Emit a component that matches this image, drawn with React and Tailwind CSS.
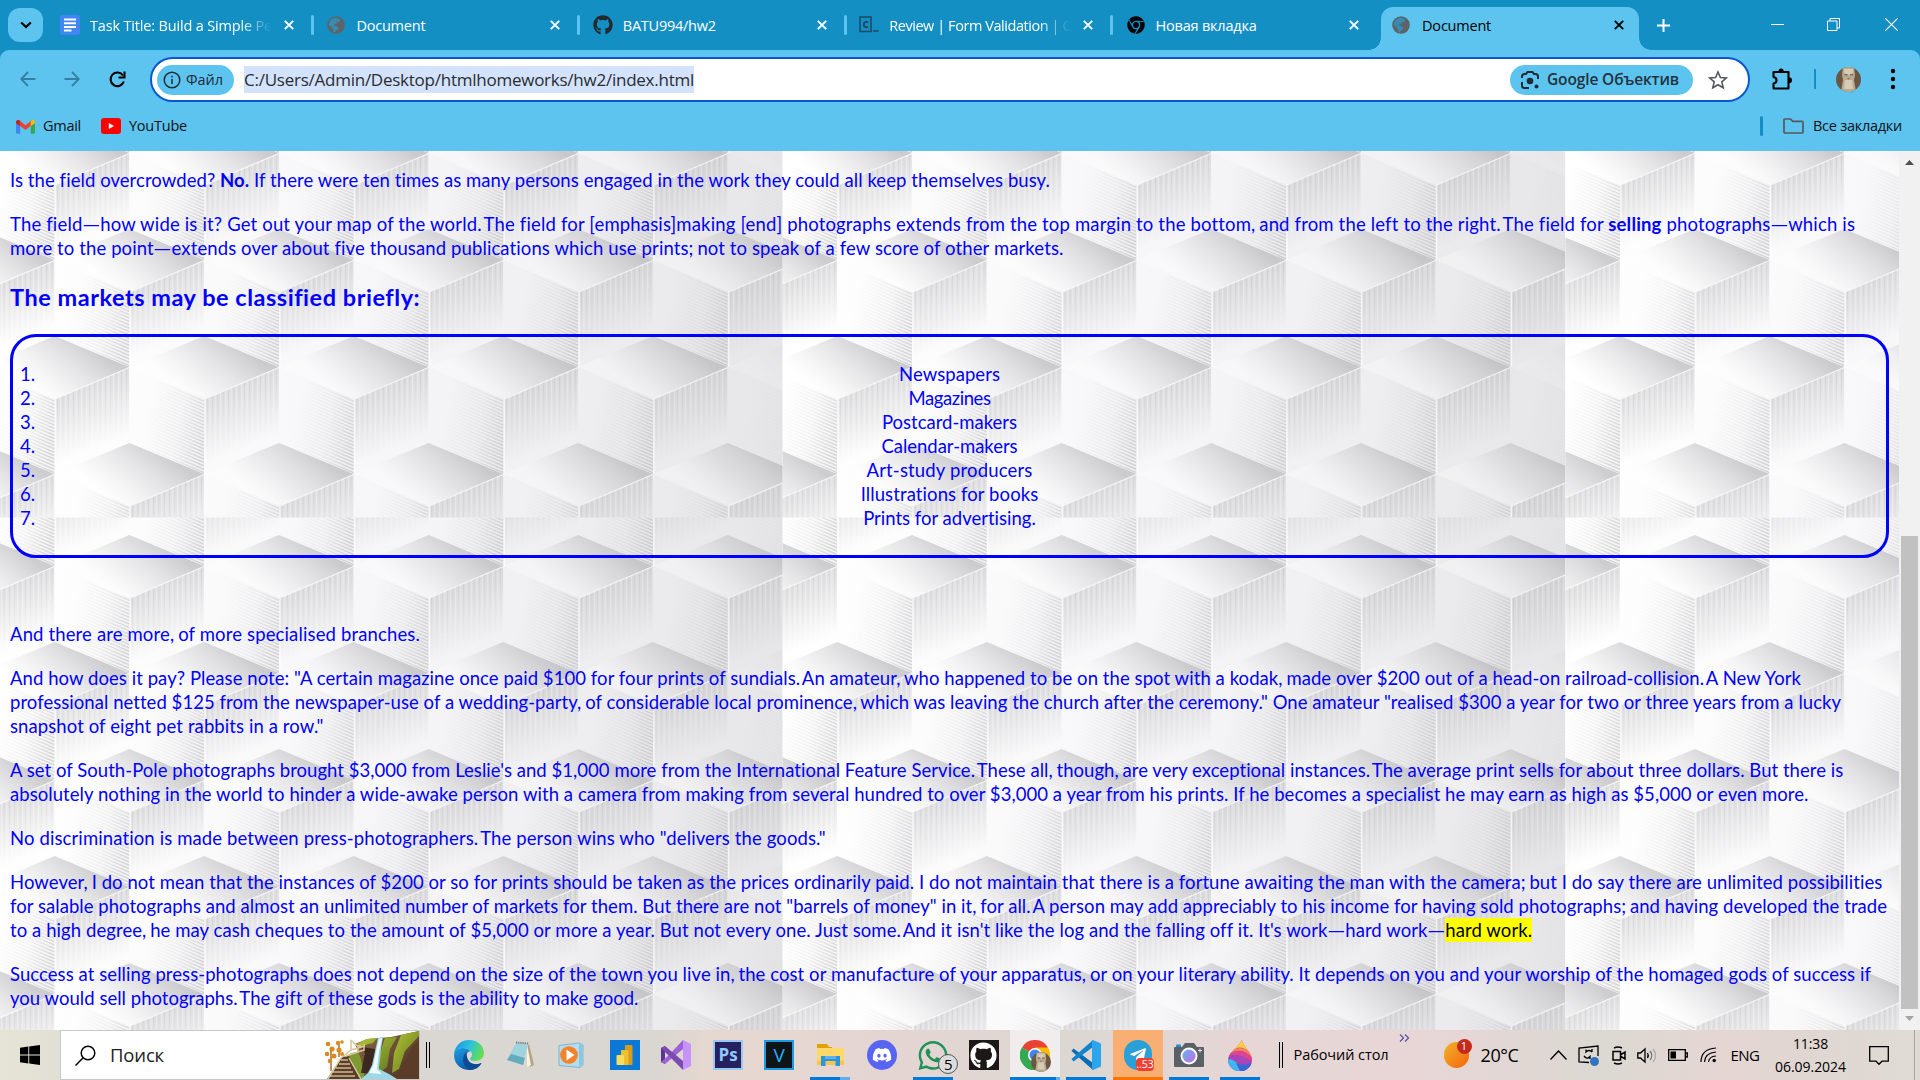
import React, { useLayoutEffect, useRef, useState } from "react";
import { FaGithub, FaDiscord, FaWhatsapp, FaTelegramPlane, FaChrome } from "react-icons/fa";

/* Text set to an exact width by spreading the difference over its letters. */
function Fit({ w, className = "", children }) {
  const ref = useRef(null);
  const [gap, setGap] = useState(null);
  useLayoutEffect(() => {
    const el = ref.current;
    setGap((w - el.getBoundingClientRect().width) / Math.max(1, el.textContent.length));
  }, [w]);
  return (
    <span ref={ref} className={"inline-block shrink-0 whitespace-pre " + className} style={gap === null ? undefined : { letterSpacing: gap + "px" }}>
      {children}
    </span>
  );
}

/* ---------- Browser chrome ---------- */

const Cross = ({ color = "white" }) => (
  <svg className="h-[10px] w-[10px] shrink-0" viewBox="0 0 10 10" stroke={color} strokeWidth="1.9">
    <path d="M.8.8l8.4 8.4M9.2.8L.8 9.2" />
  </svg>
);

const Globe = () => (
  <svg className="h-[18px] w-[18px] shrink-0" viewBox="0 0 18 18">
    <circle cx="9" cy="9" r="8.8" fill="#5f6368" />
    <path fill="#2f93bd" d="M6.500 2.200c3-.9 4.800 0 6.800 2.100l-1 1.600-2.200.4-.8 1.700-2.300.6.200 1.400 2.800.2 1.700 1.700-1 2.100-1.900.6-.6 1.700-2-.3.300-2.300-1.800-1.500v-1.500L1.800 9.300C1.800 6 4 3 6.500 2.200z" opacity=".85" />
  </svg>
);

const DocIcon = () => (
  <svg className="h-5 w-5" viewBox="0 0 20 20">
    <rect width="20" height="20" rx="2" fill="#4285f4" />
    <path stroke="white" strokeWidth="2" d="M4 4.500h12M4 8.300h12M4 12h12M4 15.500h7.500" />
  </svg>
);

const CodeIcon = () => (
  <svg className="h-5 w-5" viewBox="0 0 20 20" fill="none" stroke="#1f4a63">
    <path strokeWidth="1.600" d="M1 2h11v14.500H1zM14 16h5.500" />
    <path strokeWidth="2" d="M9 7.600c-1.800-1.500-4.200-.6-4.200 1.900s2.400 3.400 4.200 1.900" />
  </svg>
);

function Tab({ icon, label, w, fade }) {
  return (
    <div className="flex h-full w-[266.4px] shrink-0 items-center">
      <div className="flex w-5 justify-center">{icon}</div>
      <div className={"ml-[10px] w-[184px] overflow-hidden pt-[2px] text-white " + (fade ? "[mask-image:linear-gradient(90deg,black_150px,transparent_181px)]" : "")}>
        <Fit w={w}>{label}</Fit>
      </div>
      <div className="ml-[10px] flex w-[10px] justify-center"><Cross /></div>
      <div className="ml-[17px] h-5 w-[3px] rounded bg-[#5dc4f0]" />
    </div>
  );
}

function TabStrip() {
  return (
    <div className="flex h-[50px] bg-[#148fc4] text-[14.500px]">
      <div className="ml-2 mt-2 flex h-[34px] w-[35px] items-center justify-center rounded-[12px] bg-[#5dc4f0]">
        <svg className="h-[8px] w-[12px]" viewBox="0 0 12 8" fill="none" stroke="black" strokeWidth="2.200"><path d="M1.200 1.500L6 6l4.800-4.500" /></svg>
      </div>
      <div className="ml-[17px] flex">
        <Tab icon={<DocIcon />} label="Task Title: Build a Simple Pe" w={182} fade />
        <Tab icon={<Globe />} label="Document" w={69} />
        <Tab icon={<FaGithub className="h-5 w-5 text-[#24292f]" />} label="BATU994/hw2" w={93} />
        <Tab icon={<CodeIcon />} label="Review | Form Validation | C" w={182} fade />
        <div className="-mr-[10.5px] flex h-full">
          <div className="flex w-[266px] items-center">
            <div className="flex w-5 justify-center"><FaChrome className="h-[18px] w-[18px] text-black" /></div>
            <Fit w={101} className="ml-[10px] pt-[2px] text-white">Новая вкладка</Fit>
            <div className="ml-[92px]"><Cross /></div>
          </div>
        </div>
      </div>
      <div className="relative mt-[7px] flex h-[43px] w-[258px] items-center rounded-t-[12px] bg-[#5dc4f0] pb-[7px] pl-[11px]">
        <div className="absolute -left-[12px] bottom-0 h-3 w-3 bg-[radial-gradient(circle_at_0_0,transparent_11.5px,#5dc4f0_12px)]" />
        <div className="absolute -right-[12px] bottom-0 h-3 w-3 bg-[radial-gradient(circle_at_100%_0,transparent_11.5px,#5dc4f0_12px)]" />
        <Globe />
        <Fit w={69} className="ml-3 pt-[2px] text-black">Document</Fit>
        <div className="ml-[123px]"><Cross color="black" /></div>
      </div>
      <svg className="ml-[18px] mt-[19px] h-[13px] w-[13px]" viewBox="0 0 13 13" stroke="white" strokeWidth="2"><path d="M6.500 0v13M0 6.500h13" /></svg>
      <svg className="ml-[101px] mt-[18px] h-[13px] w-[13px]" viewBox="0 0 13 13" stroke="white"><path d="M0 6.500h13" /></svg>
      <svg className="ml-[43px] mt-[18px] h-[13px] w-[13px]" viewBox="0 0 13 13" fill="none" stroke="white"><path d="M.5 3h9.500v9.500H.5zM3 3V.5h9.500V10H10" /></svg>
      <svg className="ml-[45px] mt-[18px] h-[13px] w-[13px]" viewBox="0 0 13 13" stroke="white" strokeWidth="1.100"><path d="M0 0l13 13M13 0L0 13" /></svg>
    </div>
  );
}

const Portrait = ({ className }) => (
  <svg className={className} viewBox="0 0 25 25">
    <defs><clipPath id="portrait"><circle cx="12.5" cy="12.5" r="12.5" /></clipPath></defs>
    <g clipPath="url(#portrait)">
      <rect width="25" height="25" fill="#6a5643" />
      <path fill="#b8ab92" d="M7 0h11l1 8-1 5 2 12H5l2-12-1-5z" />
      <path fill="#d6cbb5" d="M8 2h9v4l-4 2-5-2zM9 13h7l1 9H8z" />
      <path fill="#7c6c56" d="M8.500 7h3v1.500h-3zM14 7h3v1.500h-3zM11 11h3l-1.500 1.500z" />
    </g>
  </svg>
);

function Toolbar() {
  return (
    <div className="bg-[#148fc4]">
      <div className="h-[101px] rounded-t-[9px] bg-[#5dc4f0]">
        <div className="flex h-[58px] items-center">
          <svg className="ml-5 h-4 w-4" viewBox="0 0 16 16" fill="none" stroke="#377f9f" strokeWidth="1.800"><path d="M15.500 8H1.500M8 1L1.200 8 8 15" /></svg>
          <svg className="ml-[28px] h-4 w-4" viewBox="0 0 16 16" fill="none" stroke="#377f9f" strokeWidth="1.800"><path d="M.5 8h14M8 1l6.800 7L8 15" /></svg>
          <svg className="ml-[29px] h-[17px] w-[17px]" viewBox="0 0 17 17" fill="none" stroke="black" strokeWidth="2.100"><path d="M14.800 10.500A6.800 6.800 0 1 1 14 4.500" /><path d="M15.500.5v6h-6" /></svg>
          <div className="ml-[24px] mt-[1px] flex h-[45px] w-[1600px] items-center rounded-full border-[2.5px] border-[#0b57d0] bg-white">
            <div className="ml-[5px] flex h-[30px] w-[77px] items-center rounded-full bg-[#5dc4f0] pl-[6px]">
              <svg className="h-[18px] w-[18px]" viewBox="0 0 18 18" fill="none" stroke="#1f2b33" strokeWidth="1.500"><circle cx="9" cy="9" r="7.800" /><path d="M9 8v5M9 4.800v1.800" /></svg>
              <Fit w={37} className="ml-[5px] text-[14.500px] font-medium text-[#1f2937]">Файл</Fit>
            </div>
            <div className="ml-[10px] flex h-[27px] items-center bg-[#d3e3fd]">
              <Fit w={450} className="text-[17px] text-[#2a2d32]">C:/Users/Admin/Desktop/htmlhomeworks/hw2/index.html</Fit>
            </div>
            <div className="ml-auto flex h-[30px] w-[183px] items-center rounded-full bg-[#5dc4f0] pl-[10px]">
              <svg className="h-5 w-5" viewBox="0 0 20 20" fill="none" stroke="#1f2b33" strokeWidth="2"><path d="M2 8V6.500Q2 4 4.500 4H6l1.500-2h5L14 4h1.500Q18 4 18 6.500V9M2 12v3.500Q2 18 4.500 18H9" /><circle cx="10" cy="11" r="3.300" fill="#1f2b33" stroke="none" /><circle cx="16.500" cy="16.500" r="2" fill="#1f2b33" stroke="none" /></svg>
              <Fit w={132} className="ml-[7px] pt-[1px] text-[15.500px] font-semibold text-[#22333d]">Google Объектив</Fit>
            </div>
            <svg className="ml-[15px] mr-[20px] h-[20px] w-[20px]" viewBox="0 0 20 20" fill="none" stroke="#55595e" strokeWidth="1.600"><path d="M10 2l2.400 5.500 5.900.5-4.500 3.900 1.400 5.900L10 14.700l-5.200 3.100 1.400-5.900L1.700 8l5.900-.5z" /></svg>
          </div>
          <svg className="ml-[21px] h-[25px] w-[23px]" viewBox="0 0 23 25" fill="none" stroke="black" strokeWidth="2.100"><path strokeLinejoin="round" d="M2.500 5H17.500V21.500H2.500V16.500Q5.500 16 5.500 13.200T2.500 10z" /><path fill="black" stroke="none" d="M7.500 4.500a2.600 3 0 0 1 5.200 0zM18 10.300a3 3 0 0 1 0 6z" /></svg>
          <div className="ml-[20px] h-5 w-[2px] bg-[#148fc4]" />
          <Portrait className="ml-[20px] h-[25px] w-[25px]" />
          <svg className="ml-[29px] h-[22px] w-[6px]" viewBox="0 0 6 22"><circle cx="3" cy="3" r="2.200" /><circle cx="3" cy="11" r="2.200" /><circle cx="3" cy="19" r="2.200" /></svg>
        </div>
        <div className="flex h-[36px] items-center text-[14.500px] text-[#111]">
          <svg className="ml-[16px] h-[15px] w-[19px]" viewBox="0 0 20 15"><path fill="#4285f4" d="M0 3h4.500v12H1.500Q0 15 0 13.500z" /><path fill="#34a853" d="M15.500 3H20v10.500q0 1.500-1.500 1.500h-3z" /><path fill="#ea4335" d="M0 2.500Q1 0 3.500 1L10 6.300 16.500 1v5L10 11.300 3 6z" /><path fill="#fbbc04" d="M15.500 2Q19 -1 20 2.500V4l-4.500 3z" /><path fill="#c5221f" d="M0 2.500Q1-.5 4 1.200V7L0 4z" /></svg>
          <Fit w={38} className="ml-[8px]">Gmail</Fit>
          <svg className="ml-[20px] h-[16px] w-[20px]" viewBox="0 0 20 16"><rect width="20" height="16" rx="3" fill="#f00" /><path fill="white" d="M7.800 5l5.200 3-5.200 3z" /></svg>
          <Fit w={58} className="ml-[8px]">YouTube</Fit>
          <div className="ml-auto h-5 w-[3px] rounded bg-[#148fc4]" />
          <svg className="ml-[20px] h-4 w-[21px]" viewBox="0 0 21 16" fill="none" stroke="#55595e" strokeWidth="1.700"><path strokeLinejoin="round" d="M1 1.500Q1 1 2 1h5.500l2.200 2.300H19Q20 3.300 20 4.300V14q0 1-1 1H2q-1 0-1-1z" /></svg>
          <Fit w={89} className="ml-[9px] mr-[18px]">Все закладки</Fit>
        </div>
      </div>
    </div>
  );
}

/* ---------- Page wallpaper: stacked cubes, one tile is 782.7 wide ---------- */

const TILE = 782.7;

function Cubes({ from, rows, odd }) {
  const out = [];
  for (let r = 0; r < rows; r++) {
    const shift = (r + odd) % 2 ? 129.4 : 54.6;
    for (let c = -1; c < 6; c++) {
      const x = shift + c * 149.6;
      out.push(<use key={r + ":" + c} href="#cube" x={x} y={from + r * 107} opacity={x > 790 ? 0.35 : 1} />);
    }
  }
  return out;
}

function Wallpaper() {
  return (
    <svg className="absolute inset-0 h-[879px] w-[1899px]" viewBox="0 151 1899 879">
      <defs>
        <linearGradient id="tone" x1="0" x2="1"><stop offset="0" stopColor="#fff" /><stop offset=".5" stopColor="#f6f6f8" /><stop offset="1" stopColor="#e6e6e8" /></linearGradient>
        <linearGradient id="top" gradientUnits="userSpaceOnUse" x1="24" y1="0" x2="-20" y2="54"><stop offset="0" stopColor="#b4b4b7" stopOpacity=".66" /><stop offset=".5" stopColor="#cdcdd0" stopOpacity=".4" /><stop offset="1" stopColor="#fff" stopOpacity=".3" /></linearGradient>
        <linearGradient id="fadeL" gradientUnits="userSpaceOnUse" x1="-58" y1="80" x2="2" y2="92"><stop offset="0" stopColor="#fff" stopOpacity="0" /><stop offset=".55" stopColor="#fff" stopOpacity=".3" /><stop offset="1" stopColor="#fff" stopOpacity=".95" /></linearGradient>
        <linearGradient id="fadeR" gradientUnits="userSpaceOnUse" x1="14" y1="48" x2="40" y2="112"><stop offset="0" stopColor="#fff" /><stop offset=".5" stopColor="#fff" stopOpacity=".5" /><stop offset="1" stopColor="#fff" stopOpacity="0" /></linearGradient>
        <pattern id="slant" width="4" height="3.400" patternUnits="userSpaceOnUse" patternTransform="skewY(23)"><rect width="4" height="3.400" fill="#c9c9cc" fillOpacity=".2" /><rect width="4" height="1.400" fill="#a2a2a6" fillOpacity=".46" /></pattern>
        <pattern id="vert" width="5.300" height="8" patternUnits="userSpaceOnUse"><rect width="5.300" height="8" fill="#bebec2" fillOpacity=".54" /><rect width="1" height="8" fill="#fff" fillOpacity=".3" /><rect x="2.600" width="1" height="8" fill="#98989c" fillOpacity=".18" /></pattern>
        <mask id="maskL" maskUnits="userSpaceOnUse" x="-76" y="30" width="80" height="110"><path fill="url(#fadeL)" d="M-74.800 31L0 62.700V138L-74.800 106z" /></mask>
        <mask id="maskR" maskUnits="userSpaceOnUse" x="-1" y="30" width="80" height="110"><path fill="url(#fadeR)" d="M0 62.700L74.800 31V106L0 138z" /></mask>
        <g id="cube">
          <path fill="url(#slant)" mask="url(#maskL)" d="M-74.800 31L0 62.700V138L-74.800 106z" />
          <path fill="url(#vert)" mask="url(#maskR)" d="M0 62.700L74.800 31V106L0 138z" />
          <path fill="url(#top)" d="M0 0L74.800 31 0 62.700-74.800 31z" />
          <path fill="none" stroke="#fff" strokeOpacity=".65" strokeWidth="1.300" d="M1 138V63L74.800 31.500" />
        </g>
        <clipPath id="upper"><rect y="0" width={TILE} height="517.5" /></clipPath>
        <clipPath id="lower"><rect y="517.5" width={TILE} height="520" /></clipPath>
      </defs>
      {[0, 1, 2].map((t) => (
        <g key={t} transform={"translate(" + t * TILE + " 0)"}>
          <rect width={TILE} height="1040" fill="url(#tone)" />
          <g clipPath="url(#upper)"><Cubes from={15} rows={5} odd={1} /></g>
          <g clipPath="url(#lower)"><Cubes from={428} rows={6} odd={0} /></g>
        </g>
      ))}
    </svg>
  );
}

/* ---------- Page ---------- */

/* Kerns the spaces after full stops and commas and widens the long dashes. */
const T = ({ children }) =>
  children.split(/((?<=\.) (?=[ATY])|(?<=[,;]) |—)/).map((part, i, all) => {
    if (part === "—") return <span key={i} className="mx-[1.5px] inline-block scale-x-[1.25]">—</span>;
    if (i % 2) return <span key={i} className={all[i - 1].endsWith(".") ? "-ml-[2.5px]" : "-ml-[1px]"}>{part}</span>;
    return part;
  });

const Para = ({ lines }) => (
  <p className="mb-[20px]">
    {lines.map(([w, text]) => (
      <span key={w} className="flex h-6 items-center"><Fit w={w}>{typeof text === "string" ? <T>{text}</T> : text}</Fit></span>
    ))}
  </p>
);

const markets = [
  ["Newspapers", 101],
  ["Magazines", 82],
  ["Postcard-makers", 135],
  ["Calendar-makers", 136],
  ["Art-study producers", 166],
  ["Illustrations for books", 178],
  ["Prints for advertising.", 173],
];

function Page() {
  return (
    <div className="relative flex h-[879px] overflow-hidden">
      <Wallpaper />
      <main className="relative w-[1899px] pl-[10px] pt-[17px] font-['Gill_Sans_MT','Gill_Sans','Lato',sans-serif] text-[18.500px] leading-6 text-[#0000ff]">
        <Para lines={[[1040, <><T>Is the field overcrowded? </T><b>No.</b><T> If there were ten times as many persons engaged in the work they could all keep themselves busy.</T></>]]} />
        <Para lines={[
          [1843, <><T>The field—how wide is it? Get out your map of the world. The field for [emphasis]making [end] photographs extends from the top margin to the bottom, and from the left to the right. The field for </T><b>selling</b><T> photographs—which is</T></>],
          [1053.500, "more to the point—extends over about five thousand publications which use prints; not to speak of a few score of other markets."],
        ]} />
        <h3 className="mb-[23px] mt-[23px] flex h-7 items-center text-[23.500px] font-bold"><Fit w={410}>The markets may be classified briefly:</Fit></h3>
        <ol className="h-[224px] w-[1879px] rounded-[26px] border-[3px] border-[#0000ff] pt-[25px]">
          {markets.map(([name, w], i) => (
            <li key={name} className="flex h-6 items-center pl-[7px]">
              <Fit w={16} className="w-4">{i + 1 + "."}</Fit>
              <span className="flex grow justify-center pr-[23px]"><Fit w={w}>{name}</Fit></span>
            </li>
          ))}
        </ol>
        <div className="mt-[64px]">
          <Para lines={[[410, "And there are more, of more specialised branches."]]} />
          <Para lines={[
            [1791, 'And how does it pay? Please note: "A certain magazine once paid $100 for four prints of sundials. An amateur, who happened to be on the spot with a kodak, made over $200 out of a head-on railroad-collision. A New York'],
            [1830, 'professional netted $125 from the newspaper-use of a wedding-party, of considerable local prominence, which was leaving the church after the ceremony." One amateur "realised $300 a year for two or three years from a lucky'],
            [313.500, 'snapshot of eight pet rabbits in a row."'],
          ]} />
          <Para lines={[
            [1834, "A set of South-Pole photographs brought $3,000 from Leslie's and $1,000 more from the International Feature Service. These all, though, are very exceptional instances. The average print sells for about three dollars. But there is"],
            [1798.500, "absolutely nothing in the world to hinder a wide-awake person with a camera from making from several hundred to over $3,000 a year from his prints. If he becomes a specialist he may earn as high as $5,000 or even more."],
          ]} />
          <Para lines={[[816, 'No discrimination is made between press-photographers. The person wins who "delivers the goods."']]} />
          <Para lines={[
            [1873, "However, I do not mean that the instances of $200 or so for prints should be taken as the prices ordinarily paid. I do not maintain that there is a fortune awaiting the man with the camera; but I do say there are unlimited possibilities"],
            [1877, 'for salable photographs and almost an unlimited number of markets for them. But there are not "barrels of money" in it, for all. A person may add appreciably to his income for having sold photographs; and having developed the trade'],
            [1521.500, <><T>to a high degree, he may cash cheques to the amount of $5,000 or more a year. But not every one. Just some. And it isn't like the log and the falling off it. It's work—hard work—</T><mark className="inline-block h-6 bg-[#ffff00] text-black">hard work.</mark></>],
          ]} />
          <Para lines={[
            [1861, "Success at selling press-photographs does not depend on the size of the town you live in, the cost or manufacture of your apparatus, or on your literary ability. It depends on you and your worship of the homaged gods of success if"],
            [628, "you would sell photographs. The gift of these gods is the ability to make good."],
          ]} />
        </div>
      </main>
      <div className="relative flex w-[21px] flex-col items-center bg-[#f1f1f1]">
        <svg className="mt-[9px] h-[5px] w-[9px]" viewBox="0 0 9 5"><path fill="#505050" d="M0 5L4.500 0 9 5z" /></svg>
        <div className="mt-[371px] h-[473px] w-[17px] bg-[#c1c1c1]" />
        <svg className="mt-[7px] h-[5px] w-[9px]" viewBox="0 0 9 5"><path fill="#a3a3a3" d="M0 0L4.500 5 9 0z" /></svg>
      </div>
    </div>
  );
}

/* ---------- Taskbar ---------- */

const Waterfall = () => (
  <svg className="h-[48px] w-[94px]" viewBox="0 0 94 48">
    <defs>
      <linearGradient id="cliff" x1="0" x2="1" y2="1"><stop offset="0" stopColor="#8a6a46" /><stop offset="1" stopColor="#4b3022" /></linearGradient>
      <linearGradient id="moss" x1="0" x2="1" y2="1"><stop offset="0" stopColor="#b5c535" /><stop offset="1" stopColor="#5f7622" /></linearGradient>
    </defs>
    <path fill="#7e9a33" d="M8 48L18 28l8-6 14-2 8 10-4 18z" />
    <path fill="url(#cliff)" d="M30 13l12-5 12-1 12-1L94 0v48H40l-4-20z" />
    <path fill="#3b281f" d="M36 16l14 2-1 16-7 8H36l4-20z" />
    <path fill="url(#moss)" d="M32 13l10-5 10-1-4 5-12 3zM60 7l12-1-7 12-3 18-8 6 1-20z" />
    <path fill="url(#moss)" d="M76 4L94 0v5L80 20l-6 18-7 4 2-20z" />
    <path fill="#5a3c28" d="M88 15l6-6v39H70z" />
    <path fill="#9bd8ea" d="M53 7l5-1-2 12-2 20 10 5 8 5H36l7-6 4-8z" />
    <path fill="#eefafd" d="M54 8l3-1-3 14-2 17 5 5-13-1 4-7 3-14z" />
    <path fill="#5b3d2a" d="M17 26l7-1 11 23H2z" />
    <g stroke="#cdb98f" strokeWidth="1.700"><path d="M16 29h7M14 33h11M11 37h15M8 41h20M5 45h25" /></g>
    <path fill="none" stroke="#d9c79b" strokeWidth="1.500" d="M3 48L16 27l10-8 14-4M24 27l12 21M21 25l18-6M26 9l5 5 8 2M26 9v10M33 14v7M39 13v7" />
    <path stroke="#a0632a" strokeWidth="1.400" d="M6 40V16M14 26V12" />
    <g fill="#dd8a1c"><circle cx="3" cy="13" r="2.300" /><circle cx="7" cy="18" r="2.600" /><circle cx="2" cy="23" r="2.300" /><circle cx="9" cy="25" r="2.500" /><circle cx="14" cy="19" r="2.600" /><circle cx="13" cy="12" r="2.200" /><circle cx="17" cy="11" r="1.800" /><circle cx="17" cy="23" r="2" /><circle cx="5" cy="30" r="2.300" /></g>
  </svg>
);

const Edge = () => (
  <svg className="h-[30px] w-[30px]" viewBox="0 0 30 30">
    <defs>
      <linearGradient id="e1" x1="0" x2="1" y2=".3"><stop offset="0" stopColor="#1a8fe0" /><stop offset=".55" stopColor="#2cc0df" /><stop offset="1" stopColor="#62dd55" /></linearGradient>
      <linearGradient id="e2" x1="0" x2=".6" y2="1"><stop offset="0" stopColor="#1b9de2" /><stop offset="1" stopColor="#0d57a8" /></linearGradient>
    </defs>
    <path fill="url(#e2)" d="M0 15C0 10 5 8 9 8c3 0 6 1 7.500 3-3 1-5 3-4 7 1 5 8 8 15 5-3 5-7 7-12 7C7 30 0 24 0 15z" />
    <path fill="#0c4a94" d="M12.500 12c-5 4-5 14 3 18 5 0 10-3 12-7-7 3-15 1-15-11z" />
    <path fill="url(#e1)" d="M0 14.500C.5 6 7 0 15 0c9 0 15 6 15 13 0 5-4 8-9 8-3 0-5-1-5-2s2-2 2-4.500C18 11 14 8 9 8c-4 0-8 2.500-9 6.500z" />
  </svg>
);

const Notepad = () => (
  <svg className="h-[28px] w-[30px]" viewBox="0 0 30 28">
    <path fill="#b6a27e" d="M24 3l5 21-4 2-3-20z" />
    <path fill="#f6f3e6" d="M22 3l4 21-4 2z" />
    <path fill="#9fd4df" d="M11 2l12 1-5 21L2 19z" /><path fill="#4f9fb2" d="M6 13l14 4-2 7L2 19z" opacity=".75" />
    <path stroke="#777" strokeWidth="2" strokeDasharray="1.200 1" d="M11 1.500l12.500 1" />
  </svg>
);

const MediaPlayer = () => (
  <svg className="h-[28px] w-[28px]" viewBox="0 0 28 28">
    <path fill="#b5dcec" stroke="#7db8d2" d="M2 4.500L22 2l4 2v20l-3 2.500-21-2z" />
    <path fill="#8cc7df" d="M22 2.500l3.500 2v19L22 26z" />
    <circle cx="12" cy="14" r="8.800" fill="#f4822a" /><path fill="white" d="M9.500 8.500l8 5.500-8 5.500z" />
  </svg>
);

const PowerBI = () => (
  <svg className="h-[30px] w-[30px]" viewBox="0 0 30 30">
    <rect width="30" height="30" fill="#0a78d7" />
    <rect x="15" y="5" width="7.500" height="20" rx="1" fill="#d99b1c" /><rect x="11" y="10" width="7.500" height="15" rx="1" fill="#efbf2d" /><rect x="6.500" y="15" width="7.500" height="10" rx="1" fill="#fbdc5c" />
  </svg>
);

const VisualStudio = () => (
  <svg className="h-[30px] w-[30px]" viewBox="0 0 30 30">
    <path fill="#5b3590" d="M0 8l4-2v18l-4-2z" />
    <path fill="#9b63d6" d="M4 24L0 22l8-7L22 0v9z" />
    <path fill="#7b4bb0" d="M4 6L0 8l8 8 14 14v-9z" />
    <path fill="#c792fa" d="M22 0l8 4v22l-8 4z" />
  </svg>
);

const Explorer = () => (
  <svg className="h-[28px] w-[28px]" viewBox="0 0 28 28">
    <path fill="#e0a200" d="M1 3h10l2 3h3v6H1z" /><path fill="#ffd968" d="M1 7h27v17H1z" /><path fill="#f7c648" d="M1 20h27v4H1z" />
    <path fill="#2f93dd" d="M5 15h19v10h-4.500v-5h-10v5H5z" /><path fill="#5db2ee" d="M9 15h11v3H9z" />
  </svg>
);

const ChromeLogo = () => (
  <svg className="h-[30px] w-[30px]" viewBox="0 0 30 30">
    <path fill="#ea4335" d="M15 15L2 7.500a15 15 0 0 1 26 0z" />
    <path fill="#fbbc04" d="M15 15L15 7.500h13A15 15 0 0 1 15 30z" />
    <path fill="#34a853" d="M15 15l2.500 15A15 15 0 0 1 2 7.500z" />
    <circle cx="15" cy="15" r="7" fill="white" /><circle cx="15" cy="15" r="5.500" fill="#4285f4" />
  </svg>
);

const VSCode = () => (
  <svg className="h-[30px] w-[30px]" viewBox="0 0 30 30">
    <path fill="#0b6cb5" d="M2.500 8.500L22 23v7L.5 11z" /><path fill="#1284cc" d="M2.500 21.500L22 7V0L.5 19z" />
    <path fill="#2ba5ec" d="M22 0l8 3.500v23L22 30l-1-1V1z" />
  </svg>
);

const Camera = () => (
  <svg className="h-[26px] w-[30px]" viewBox="0 0 30 26">
    <defs><linearGradient id="lens" x1="0" x2="1" y2="1"><stop offset="0" stopColor="#5fb3f4" /><stop offset="1" stopColor="#c76be0" /></linearGradient></defs>
    <rect x="2" y="2.500" width="5" height="4" rx="1" fill="#1a8fdf" />
    <path fill="#596066" d="M0 6Q0 5 1 5h7l3-4h9l3 4h6q1 0 1 1v18q0 1-1 1H1q-1 0-1-1z" />
    <circle cx="15" cy="14" r="8.500" fill="#fff" /><circle cx="15" cy="14" r="6.500" fill="url(#lens)" /><path stroke="#dfe3e6" d="M26 6.500v4M24 8.500h4" />
  </svg>
);

const Drop = () => (
  <svg className="h-[31px] w-[24px]" viewBox="0 0 24 31">
    <defs><clipPath id="drop"><path d="M14 0C14 6 24 12 24 20a11.500 11 0 0 1-24 0C0 12 10 8 14 0z" /></clipPath></defs>
    <g clipPath="url(#drop)">
      <rect width="24" height="31" fill="#a945b4" /><path fill="#ffcf33" d="M0 0h24v14Q12 2 4 12z" /><path fill="#ff7f50" d="M4 11Q12 4 24 13v5Q14 6 2 14z" /><path fill="#e2458f" d="M2 13q10-5 22 4v5Q12 12 0 16z" />
      <path fill="#3fb7f2" d="M0 19q9 0 14 12H0z" /><path fill="#3966d8" d="M8 23q6 3 16 0v8H12z" />
    </g>
  </svg>
);

const Letters = ({ className, children }) => <div className={"flex h-[30px] w-[30px] items-center justify-center " + className}>{children}</div>;

const apps = [
  { icon: <Edge /> },
  { icon: <Notepad /> },
  { icon: <MediaPlayer /> },
  { icon: <PowerBI />, place: "ml-[2px]" },
  { icon: <VisualStudio /> },
  { icon: <Letters className="border-2 border-[#9ac8f5] bg-[#25215e] text-[17px] font-bold text-[#8fc9ff]">Ps</Letters>, place: "ml-[1px]" },
  { icon: <Letters className="border-2 border-[#1a9be6] bg-[#0d1519] text-[19px] text-[#27aef5]">V</Letters> },
  { icon: <Explorer />, bar: "bg-[linear-gradient(90deg,#0078d7_30px,#62aeea_30px)]" },
  { icon: <div className="flex h-[30px] w-[30px] items-center justify-center rounded-full bg-[#5865f2]"><FaDiscord className="h-[20px] w-[20px] text-white" /></div> },
  { icon: <><FaWhatsapp className="h-[33px] w-[32px] text-[#1f9256]" /><div className="absolute left-[31px] top-[24px] flex h-5 w-5 items-center justify-center rounded-full border border-[#555] bg-[#dcdcdc] text-[15px] text-black">5</div></>, bar: "bg-[#0078d7]" },
  { icon: <div className="flex h-[30px] w-[30px] items-center justify-center bg-[#1b1817]"><FaGithub className="h-[27px] w-[27px] text-white" /></div> },
  { icon: <><ChromeLogo /><Portrait className="absolute left-[21px] top-[22px] h-5 w-5" /></>, bg: "bg-[#f1edec]", bar: "bg-[linear-gradient(90deg,#0078d7_46px,#62aeea_46px)]", wide: true },
  { icon: <VSCode />, bar: "bg-[#0078d7]" },
  { icon: <><div className="flex h-[30px] w-[28px] items-center justify-center rounded-full bg-[#2a9fd8]"><FaTelegramPlane className="h-[18px] w-[18px] text-white" /></div><div className="absolute left-[24px] top-[28px] flex h-[13px] w-[18px] items-center justify-center rounded bg-[#f0402f] text-[10.500px] text-white">..53</div></>, bg: "bg-[#f9ae74]", bar: "bg-[#ff7300]", wide: true },
  { icon: <Camera />, bar: "bg-[#0078d7]" },
  { icon: <Drop />, bar: "bg-[#0078d7]" },
];

const Rails = ({ className }) => <div className={"h-[26px] w-[4px] shrink-0 border-x border-black " + className} />;

function Taskbar() {
  return (
    <div className="flex h-[50px] items-center bg-[linear-gradient(90deg,#e5e4d5_0,#e2e0d5_60px,#dad7d2_430px,#dad6d2_660px,#e6d8cf_710px,#e4d5d3_900px,#dcd7d2_1080px,#e6d6d5_1250px,#e8d6d6_1420px,#dbd8d2_1600px,#e5d6d4_1720px,#e0d6d1_1800px,#dfdbd4_1920px)] text-black">
      <svg className="ml-5 h-5 w-5 shrink-0" viewBox="0 0 20 20"><path d="M0 2.800L8.300 1.600v7.900H0zM9.200 1.500L20 0v9.500H9.200zM0 10.400h8.300v8L0 17.200zM9.200 10.400H20V20L9.200 18.500z" /></svg>
      <div className="ml-5 flex h-[50px] w-[360px] shrink-0 items-center border border-[#c8c8c8] bg-white">
        <svg className="ml-[14px] h-[21px] w-[21px]" viewBox="0 0 21 21" fill="none" stroke="black" strokeWidth="1.500"><circle cx="13" cy="8" r="6.800" /><path d="M8.200 12.800L.5 20.500" /></svg>
        <Fit w={54} className="ml-[14px] text-[18.500px] text-[#222]">Поиск</Fit>
        <div className="ml-auto"><Waterfall /></div>
      </div>
      <Rails className="ml-[6px]" />
      <div className="ml-[13.5px] flex h-full">
        {apps.map((a, i) => (
          <div key={i} className={"relative flex h-full w-[51.2px] shrink-0 items-center justify-center " + (a.place ?? "")}>
            {a.bg && <div className={"absolute inset-y-0 left-[0.6px] w-[50px] " + a.bg} />}
            <div className="relative flex h-full w-full items-center justify-center">{a.icon}</div>
            {a.bar && <div className={"absolute bottom-0 h-[3px] " + (a.wide ? "w-[50px] " : "w-10 ") + a.bar} />}
          </div>
        ))}
      </div>
      <Rails className="ml-[13px]" />
      <Fit w={95} className="ml-[11px] text-[14.500px]">Рабочий стол</Fit>
      <svg className="-mt-[34px] ml-[10px] h-[8px] w-[11px] shrink-0" viewBox="0 0 11 8" fill="none" stroke="#5856a8" strokeWidth="1.300"><path d="M1 .5L4.500 4 1 7.500M6 .5L9.500 4 6 7.500" /></svg>
      <div className="relative ml-[34px] h-[26px] w-[25px] shrink-0 rounded-full bg-[linear-gradient(135deg,#f0b429,#f7630c)]">
        <div className="absolute -top-[3px] left-[13px] flex h-[15px] w-[15px] items-center justify-center rounded-full bg-[#c42b1c] text-[11px] text-white">1</div>
      </div>
      <Fit w={38} className="ml-[12px] text-[18px]">20°C</Fit>
      <svg className="ml-[31px] h-[10px] w-[17px] shrink-0" viewBox="0 0 17 10" fill="none" stroke="black" strokeWidth="1.400"><path d="M.5 9.500l8-8.500 8 8.500" /></svg>
      <svg className="ml-[11px] h-[21px] w-[21px] shrink-0" viewBox="0 0 21 21" fill="none" stroke="black" strokeWidth="1.300"><path d="M11 17.500L1 17V3l19-2v10M14 7q-3-3-6 0V4.500M6 11q3 4 6 .5v2.500M14 7V4" /><circle cx="16.500" cy="16.500" r="4.500" fill="#2e74c0" stroke="none" /></svg>
      <svg className="ml-[12px] h-[19px] w-[16px] shrink-0" viewBox="0 0 16 19" fill="none" stroke="black" strokeWidth="1.500"><path d="M2 5.500h7.500v8.500H2zM10 8.500l4-2.500v7l-4-2.500M3 2q4-2 8 0M3 17q4 2 8 0" /></svg>
      <svg className="ml-[10px] h-[17px] w-[21px] shrink-0" viewBox="0 0 21 17" fill="none" stroke="black" strokeWidth="1.300"><path d="M.8 6v5h2.700L8 15V2L3.500 6zM10.500 6q1.500 2.500 0 5" /><path stroke="#777" d="M13 4q3.500 4.500 0 9" /><path stroke="#aaa" d="M16 2q5 6.500 0 13" /></svg>
      <svg className="ml-[10px] h-[12px] w-[20px] shrink-0" viewBox="0 0 20 12"><path fill="none" stroke="black" strokeWidth="1.300" d="M.7.700h16.600v10.600H.7zM18 4h1.300v4H18" /><path d="M2.500 2.500H8v7H2.500z" /></svg>
      <svg className="ml-[12px] h-[16px] w-[17px] shrink-0" viewBox="0 0 17 16" fill="none" stroke="black" strokeWidth="1.200"><path d="M1 15Q1 2 16 1M4.500 15Q5 6 16 5M8.500 15q.5-5.500 7.500-6" /><circle cx="14.200" cy="13.500" r="1.700" fill="black" stroke="none" /></svg>
      <Fit w={29} className="ml-[14px] text-[15px]">ENG</Fit>
      <div className="ml-[15px] flex w-[72px] shrink-0 flex-col items-center text-[14px] leading-[23px]">
        <Fit w={35}>11:38</Fit>
        <Fit w={71}>06.09.2024</Fit>
      </div>
      <svg className="ml-[22px] h-[19px] w-[20px] shrink-0" viewBox="0 0 20 19" fill="none" stroke="black" strokeWidth="1.300"><path d="M.7.700h18.600v14.500H13L10 18.300l-3-3.100H.7z" /></svg>
      <div className="ml-auto mr-[5px] h-full w-px shrink-0 bg-[#a8a5a0]" />
    </div>
  );
}

export default function App() {
  return (
    <div className="h-[1080px] w-[1920px] overflow-hidden font-['Segoe_UI','Open_Sans','Noto_Sans',sans-serif]">
      <TabStrip />
      <Toolbar />
      <Page />
      <Taskbar />
    </div>
  );
}
